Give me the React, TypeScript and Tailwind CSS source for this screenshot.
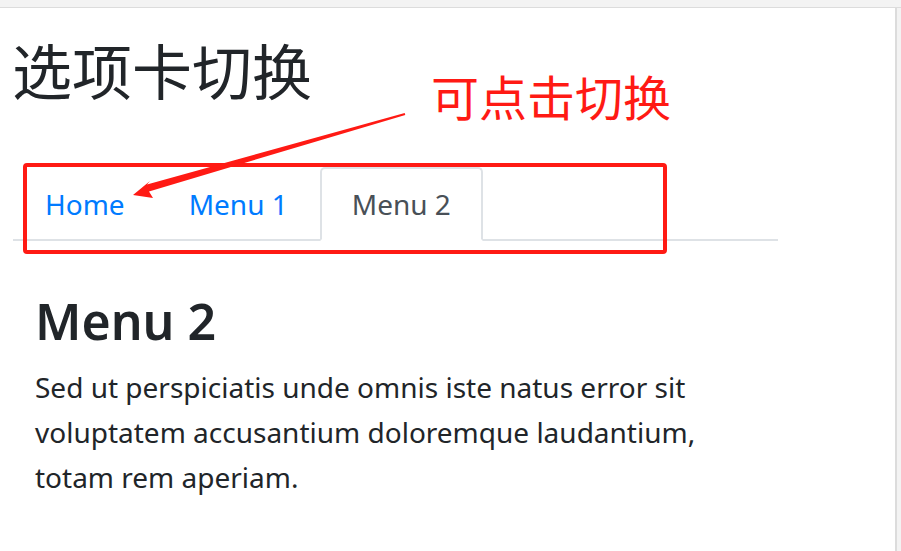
import { useState } from "react";

const tabs = [
  {
    id: "home",
    label: "Home",
    title: "HOME",
    text: "Lorem ipsum dolor sit amet, consectetur adipisicing elit, sed do eiusmod tempor incididunt ut labore et dolore magna aliqua.",
  },
  {
    id: "menu1",
    label: "Menu 1",
    title: "Menu 1",
    text: "Ut enim ad minim veniam, quis nostrud exercitation ullamco laboris nisi ut aliquip ex ea commodo consequat.",
  },
  { id: "menu2", label: "Menu 2", title: "Menu 2", text: "" },
];

// red annotation arrow pointing at the first tab
function Arrow() {
  return (
    <svg className="absolute left-0 top-0" width="901" height="551" viewBox="0 0 901 551">
      <polygon
        points="404.7,113 147,184.6 150,181 133,195 153,198 149,191.4 405.3,115"
        fill="#ff1a14"
      />
    </svg>
  );
}

export default function App() {
  const [active, setActive] = useState("menu2");
  const current = tabs.find((t) => t.id === active)!;

  return (
    <div
      className="relative w-[901px] h-[551px] overflow-hidden bg-white flex flex-col"
      style={{ fontFamily: '"Noto Sans", "Noto Sans CJK SC", sans-serif' }}
    >
      {/* browser chrome strip */}
      <div className="h-[8px] shrink-0 bg-[#f3f3f3] border-b border-[#dcdcdc]" />

      <div className="flex flex-1">
        <div className="flex-1 pl-[13px]">
          <h1 className="mt-[34px] -ml-[1px] text-[60px] leading-[60px] text-[#212529] font-normal">
            选项卡切换
          </h1>

          {/* tabs */}
          <ul className="mt-[65px] flex w-[765px] border-b-2 border-[#dee2e6]">
            {tabs.map((t) => (
              <li key={t.id} className="-mb-[2px]">
                <button
                  onClick={() => setActive(t.id)}
                  className={
                    t.id === active
                      ? "px-[30px] pt-[16px] pb-[16px] text-[28px] leading-[38px] text-[#495057] bg-white border-2 border-[#dee2e6] border-b-white rounded-t-[5px]"
                      : "px-[30px] pt-[16px] pb-[16px] text-[28px] leading-[38px] text-[#007bff] border-2 border-transparent"
                  }
                >
                  {t.label}
                </button>
              </li>
            ))}
          </ul>

          {/* tab content */}
          <div className="pl-[22px] pt-[50px] text-[#212529]">
            <h3 className="text-[50px] leading-[60px] font-semibold">{current.title}</h3>
            {current.text ? (
              <p className="mt-[14px] text-[28px] leading-[45px]">{current.text}</p>
            ) : (
              <p className="mt-[14px] text-[28px] leading-[45px]">
                Sed ut perspiciatis unde omnis iste natus error sit
                <br />
                voluptatem accusantium doloremque laudantium,
                <br />
                totam rem aperiam.
              </p>
            )}
          </div>
        </div>
        {/* window edge */}
        <div className="w-[2px] bg-[#dcdcdc]" />
        <div className="w-[4px] bg-[#f3f3f3]" />
      </div>

      {/* annotations */}
      <div className="absolute left-[431px] top-[68px] text-[48px] leading-[60px] text-[#ff1a14]">
        可点击切换
      </div>
      <div className="absolute left-[23px] top-[163px] w-[644px] h-[91px] border-4 border-[#ff1a14] rounded-[4px] pointer-events-none" />
      <Arrow />
    </div>
  );
}
